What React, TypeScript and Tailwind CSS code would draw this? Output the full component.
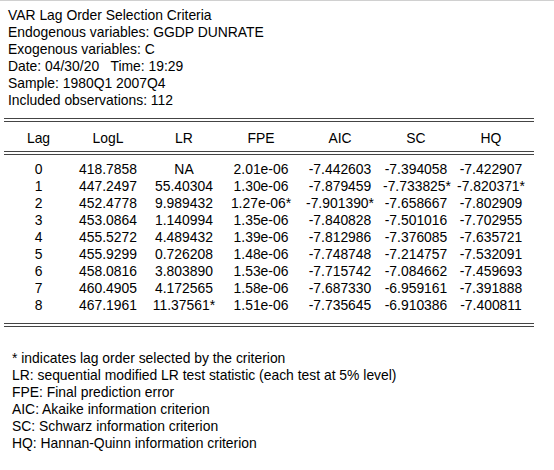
const HEADER_LINES = [
  "VAR Lag Order Selection Criteria",
  "Endogenous variables: GGDP DUNRATE",
  "Exogenous variables: C",
  "Date: 04/30/20   Time: 19:29",
  "Sample: 1980Q1 2007Q4",
  "Included observations: 112",
];

const COLS = ["Lag", "LogL", "LR", "FPE", "AIC", "SC", "HQ"];

const ROWS = [
  ["0", "418.7858", "NA", "2.01e-06", "-7.442603", "-7.394058", "-7.422907"],
  ["1", "447.2497", "55.40304", "1.30e-06", "-7.879459", "-7.733825*", "-7.820371*"],
  ["2", "452.4778", "9.989432", "1.27e-06*", "-7.901390*", "-7.658667", "-7.802909"],
  ["3", "453.0864", "1.140994", "1.35e-06", "-7.840828", "-7.501016", "-7.702955"],
  ["4", "455.5272", "4.489432", "1.39e-06", "-7.812986", "-7.376085", "-7.635721"],
  ["5", "455.9299", "0.726208", "1.48e-06", "-7.748748", "-7.214757", "-7.532091"],
  ["6", "458.0816", "3.803890", "1.53e-06", "-7.715742", "-7.084662", "-7.459693"],
  ["7", "460.4905", "4.172565", "1.58e-06", "-7.687330", "-6.959161", "-7.391888"],
  ["8", "467.1961", "11.37561*", "1.51e-06", "-7.735645", "-6.910386", "-7.400811"],
];

const NOTES = [
  "* indicates lag order selected by the criterion",
  "LR: sequential modified LR test statistic (each test at 5% level)",
  "FPE: Final prediction error",
  "AIC: Akaike information criterion",
  "SC: Schwarz information criterion",
  "HQ: Hannan-Quinn information criterion",
];

// column widths picked so each column centre lands where the reference has it
const GRID = "grid grid-cols-[69px_70px_82px_72px_86px_66px_84px]";

function DoubleRule({ className = "" }: { className?: string }) {
  return <div className={`ml-[4px] w-[530px] h-[4px] border-y border-[#444] ${className}`} />;
}

export default function App() {
  return (
    <div
      className="w-[554px] min-h-[470px] bg-white border-t border-[#d0d0d0] text-[13.9px] leading-[17px] text-black"
      style={{ fontFamily: '"Liberation Sans", Arial, sans-serif' }}
    >
      <div className="pl-[8px] pt-[6px]">
        {HEADER_LINES.map((l) => (
          <div key={l} className="whitespace-pre">{l}</div>
        ))}
      </div>

      <DoubleRule className="mt-[9px]" />

      <div className={`${GRID} ml-[4px] mt-[8px]`}>
        {COLS.map((c) => (
          <div key={c} className="text-center">{c}</div>
        ))}
      </div>

      <DoubleRule className="mt-[4px]" />

      <div className="ml-[4px] mt-[6px]">
        {ROWS.map((r) => (
          <div key={r[0]} className={GRID}>
            {r.map((v, i) => (
              <div key={i} className="text-center whitespace-nowrap">{v}</div>
            ))}
          </div>
        ))}
      </div>

      <DoubleRule className="mt-[9px]" />

      <div className="pl-[12px] mt-[23px]">
        {NOTES.map((n) => (
          <div key={n}>{n}</div>
        ))}
      </div>
    </div>
  );
}
